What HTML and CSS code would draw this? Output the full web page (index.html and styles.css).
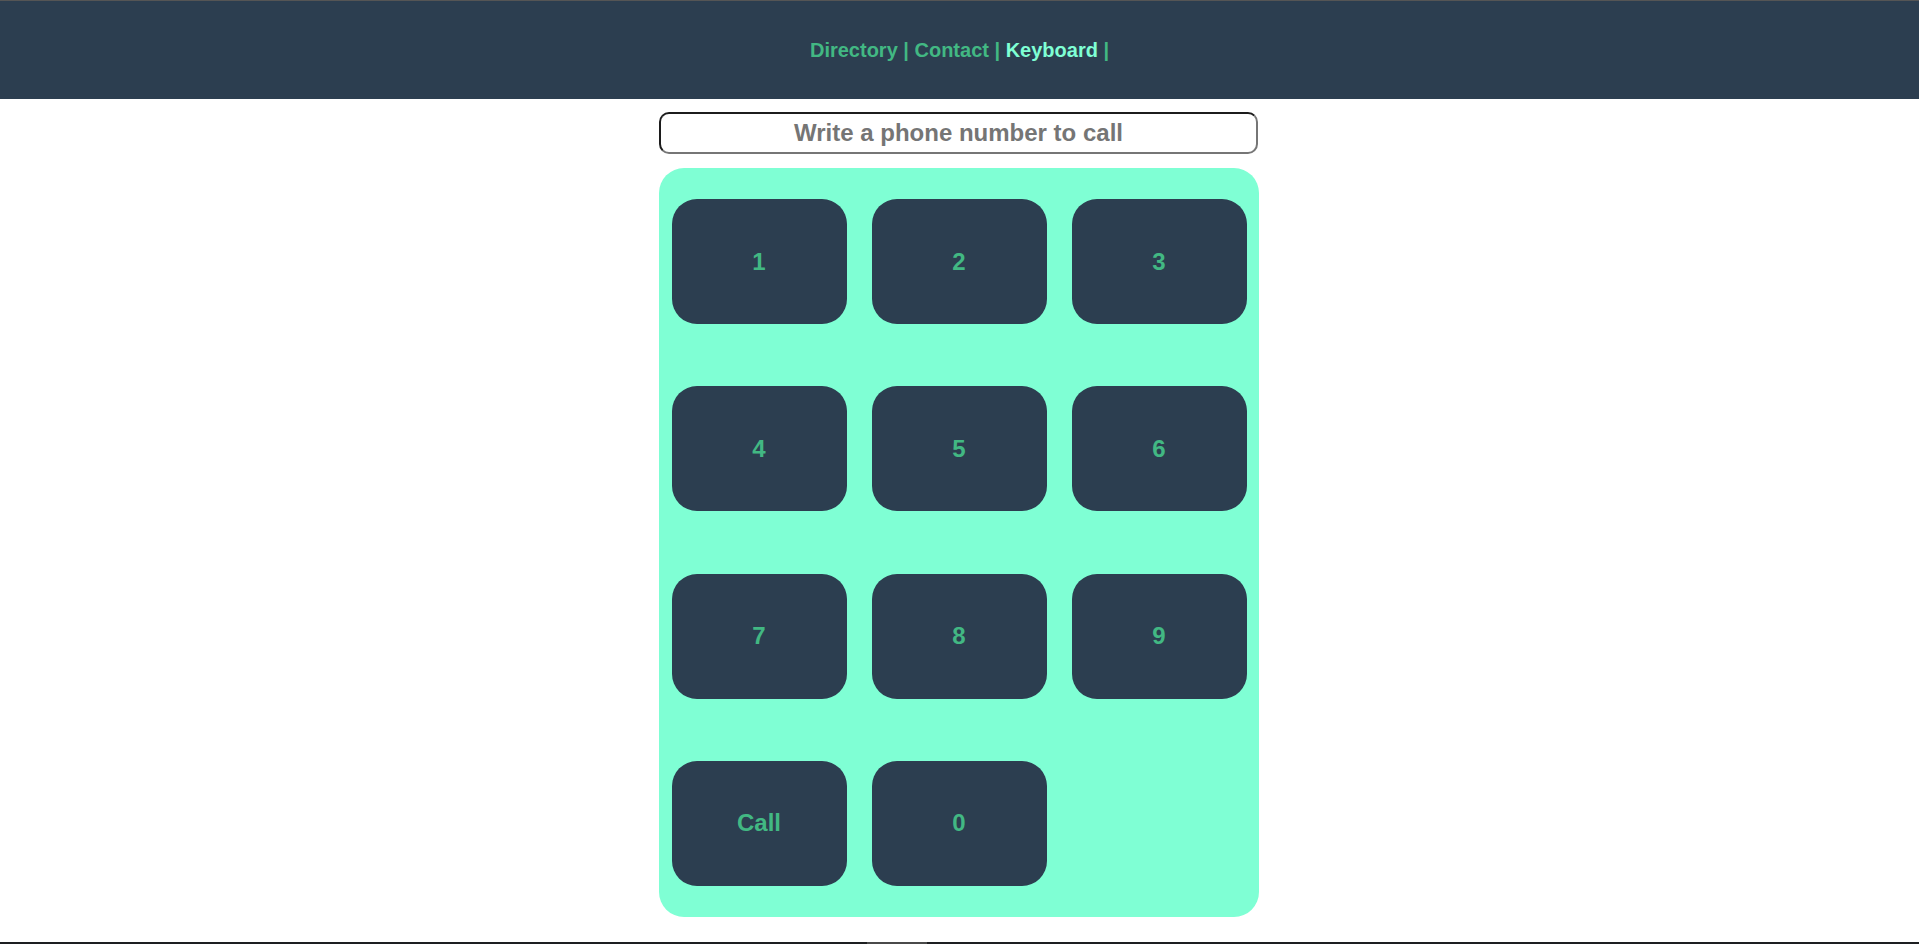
FILE: index.html
```html
<!DOCTYPE html>
<html lang="en">
<head>
<meta charset="utf-8">
<title>Keyboard</title>
<link rel="stylesheet" href="styles.css">
</head>
<body>
<header class="topbar">
  <nav class="nav">
    <a class="nav-link" href="#">Directory</a> | <a class="nav-link" href="#">Contact</a> | <a class="nav-link active" href="#">Keyboard</a> |
  </nav>
</header>
<main class="main">
  <input class="phone-input" type="text" placeholder="Write a phone number to call">
  <div class="keypad">
    <button class="key">1</button>
    <button class="key">2</button>
    <button class="key">3</button>
    <button class="key">4</button>
    <button class="key">5</button>
    <button class="key">6</button>
    <button class="key">7</button>
    <button class="key">8</button>
    <button class="key">9</button>
    <button class="key">Call</button>
    <button class="key">0</button>
  </div>
</main>
<div class="bottom-bar"><div class="bottom-thumb"></div></div>
</body>
</html>
```

FILE: styles.css
```css
html, body {
  margin: 0;
  padding: 0;
  background: #ffffff;
}

body {
  font-family: "Liberation Sans", Arial, Helvetica, sans-serif;
  color: #2c3e50;
}

.topbar {
  height: 98px;
  border-top: 1px solid #555555;
  background: #2c3e50;
  display: flex;
  align-items: center;
  justify-content: center;
}

.nav {
  font-size: 20px;
  font-weight: bold;
  color: #42b883;
}

.nav-link {
  color: #42b883;
  text-decoration: none;
}

.nav-link.active {
  color: #7fffd4;
}

.main {
  display: flex;
  flex-direction: column;
  align-items: center;
  padding-right: 1px;
}

.phone-input {
  box-sizing: border-box;
  margin-top: 13px;
  width: 599px;
  height: 42px;
  border-radius: 10px;
  border-width: 2px;
  border-style: solid;
  border-color: #1c1c1c #767676 #767676 #1c1c1c;
  font-family: "Liberation Sans", Arial, sans-serif;
  font-size: 24px;
  font-weight: bold;
  text-align: center;
  outline: none;
  padding: 0;
  position: relative;
  left: -0.5px;
}

.phone-input::placeholder {
  color: #757575;
  opacity: 1;
}

.keypad {
  box-sizing: border-box;
  margin-top: 14px;
  width: 600px;
  height: 749px;
  background: #7fffd4;
  border-radius: 25px;
  display: grid;
  grid-template-columns: repeat(3, 1fr);
  grid-template-rows: repeat(4, 1fr);
  place-items: center;
}

.key {
  width: 175px;
  height: 125px;
  border: none;
  border-radius: 25px;
  background: #2c3e50;
  color: #42b883;
  font-family: "Liberation Sans", Arial, sans-serif;
  font-size: 24px;
  font-weight: bold;
  padding: 0;
  cursor: pointer;
}

.bottom-bar {
  position: fixed;
  left: 0;
  right: 0;
  bottom: 0;
  height: 2px;
  background: #1d1f21;
}

.bottom-thumb {
  position: absolute;
  left: 867px;
  width: 60px;
  top: 0;
  bottom: 0;
  background: #4a4a4a;
}
```
